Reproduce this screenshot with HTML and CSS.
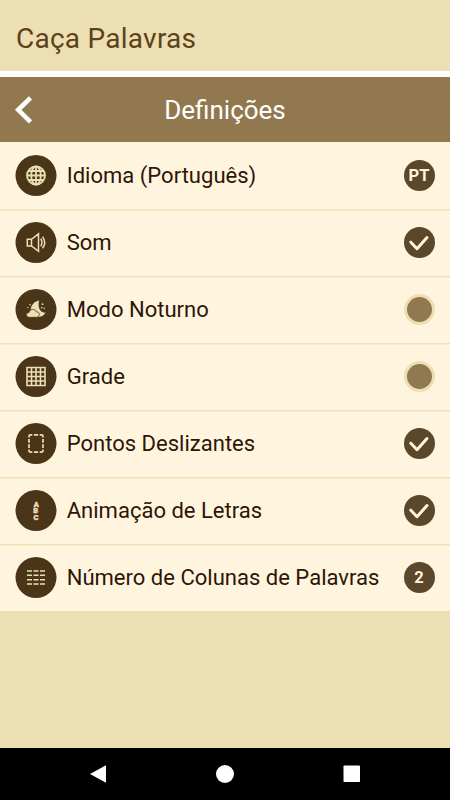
FILE: index.html
```html
<!DOCTYPE html>
<html lang="pt">
<head>
<meta charset="utf-8">
<title>Caça Palavras</title>
<link rel="stylesheet" href="styles.css">
</head>
<body>
<div class="app">
  <header class="titlebar"><h1>Caça Palavras</h1></header>
  <div class="toolbar">
    <svg class="back" viewBox="0 0 20 30"><path d="M16.5 2.8 4.2 14.8 16.5 26.8" fill="none" stroke="#fff" stroke-width="4.6"/></svg>
    <h2>Definições</h2>
  </div>
  <ul class="settings">
    <li class="row">
      <svg class="icon" viewBox="-.5 0 42 42"><circle class="disc" cx="20.5" cy="20.5" r="20.5"/><g class="line" stroke-width="1.8"><circle cx="20.5" cy="20.5" r="9"/><ellipse cx="20.5" cy="20.5" rx="4.8" ry="9"/><path d="M20.5 11.5v18M11.5 20.5h18M13 16h15M13 25h15"/></g></svg>
      <span class="label">Idioma (Português)</span>
      <span class="badge">PT</span>
    </li>
    <li class="row">
      <svg class="icon" viewBox="-.5 0 42 42"><circle class="disc" cx="20.5" cy="20.5" r="20.5"/><g class="line" stroke-width="1.5"><path d="M11.8 17.3h4.2l7-5.4v17.4l-7-5.4h-4.2zM16 17.3v6.6M25.2 16.8q2.6 3.7 0 7.4M27 14.7q4.4 5.8 0 11.6"/></g></svg>
      <span class="label">Som</span>
      <svg class="toggle" viewBox="0 0 31 31"><circle class="on" cx="15.5" cy="15.5" r="15.5"/><path class="check" d="m6.8 15.2 6.2 6.5 10-11.2"/></svg>
    </li>
    <li class="row">
      <svg class="icon" viewBox="-.5 0 42 42"><circle class="disc" cx="20.5" cy="20.5" r="20.5"/><path class="fill" d="M23.6 11.5c-.9 3.6-.6 7.6 1.3 10 1.3 1.5 3.1 2.3 5.2 2.1-1.5 3.2-5 4.9-8.6 4.1-4.3-1-6.8-4.3-6.2-7.8.8-4.5 4-7.6 8.3-8.4z"/><path class="fill cloud" d="M14 28.3c-4 0-4-4.8-.5-4.8.5-3.8 6.3-4.1 7.3-.7 4-.1 4.1 5.5 0 5.5z"/><g class="fill"><circle cx="14.5" cy="15.7" r=".8"/><circle cx="12.4" cy="18.6" r=".7"/><circle cx="27" cy="15.2" r=".9"/><circle cx="26.2" cy="18.7" r=".8"/><circle cx="28.7" cy="19.3" r=".8"/></g></svg>
      <span class="label">Modo Noturno</span>
      <svg class="toggle" viewBox="0 0 31 31"><circle class="off" cx="15.5" cy="15.5" r="14"/></svg>
    </li>
    <li class="row">
      <svg class="icon" viewBox="-.5 0 42 42"><circle class="disc" cx="20.5" cy="20.5" r="20.5"/><path class="line" stroke-width="1.6" d="M11.5 11.5h18v18h-18zM16 11.5v18M20.5 11.5v18M25 11.5v18M11.5 16h18M11.5 20.5h18M11.5 25h18"/></svg>
      <span class="label">Grade</span>
      <svg class="toggle" viewBox="0 0 31 31"><circle class="off" cx="15.5" cy="15.5" r="14"/></svg>
    </li>
    <li class="row">
      <svg class="icon" viewBox="-.5 0 42 42"><circle class="disc" cx="20.5" cy="20.5" r="20.5"/><path class="line" stroke-width="1.7" d="M13.5 14.6v-1.3q0-1.5 1.5-1.5h1.8M24.2 11.8H26q1.5 0 1.5 1.5v1.3M27.5 26.4v1.3q0 1.5-1.5 1.5h-1.8M16.8 29.2H15q-1.5 0-1.5-1.5v-1.3M18.4 11.8h4.2M18.4 29.2h4.2M13.5 16v3.7M13.5 21.3V25M27.5 16v3.7M27.5 21.3V25"/></svg>
      <span class="label">Pontos Deslizantes</span>
      <svg class="toggle" viewBox="0 0 31 31"><circle class="on" cx="15.5" cy="15.5" r="15.5"/><path class="check" d="m6.8 15.2 6.2 6.5 10-11.2"/></svg>
    </li>
    <li class="row">
      <svg class="icon" viewBox="-.5 0 42 42"><circle class="disc" cx="20.5" cy="20.5" r="20.5"/><g class="letters"><text x="20.7" y="17">A</text><text x="20.1" y="23.4">B</text><text x="20.4" y="29.8">C</text></g></svg>
      <span class="label">Animação de Letras</span>
      <svg class="toggle" viewBox="0 0 31 31"><circle class="on" cx="15.5" cy="15.5" r="15.5"/><path class="check" d="m6.8 15.2 6.2 6.5 10-11.2"/></svg>
    </li>
    <li class="row">
      <svg class="icon" viewBox="-.5 0 42 42"><circle class="disc" cx="20.5" cy="20.5" r="20.5"/><path class="line" stroke-width="1.6" stroke-dasharray="5 1.5" d="M11.5 14h18M11.5 18.3h18M11.5 22.7h18M11.5 27h18"/></svg>
      <span class="label">Número de Colunas de Palavras</span>
      <span class="badge">2</span>
    </li>
  </ul>
  <nav class="navbar">
    <svg viewBox="0 0 18 18"><path d="M1 9 17 .2v17.6z"/></svg>
    <svg viewBox="0 0 18 18"><circle cx="9" cy="9" r="9"/></svg>
    <svg viewBox="0 0 18 18"><rect x=".5" y=".5" width="16.5" height="16.5" rx=".8"/></svg>
  </nav>
</div>
</body>
</html>
```
FILE: styles.css
```css
* {
  box-sizing: border-box;
}

body {
  margin: 0;
  font-family: Roboto, "Liberation Sans", sans-serif;
  color: #2e1507;
}

.app {
  display: flex;
  flex-direction: column;
  height: 800px;
  width: 450px;
  background: #ecdfb4;
}

.titlebar {
  height: 77px;
  padding: 0 16px;
  border-bottom: 6px solid #fff;
  display: flex;
  align-items: center;
}

h1,
h2 {
  margin: 0;
  font-weight: 400;
}

h1 {
  font-size: 28px;
  line-height: 34px;
  padding-top: 6px;
  color: #5d4219;
  letter-spacing: 0.25px;
}

.toolbar {
  height: 65px;
  padding: 0 14px;
  display: grid;
  grid-template-columns: 20px 1fr 20px;
  align-items: center;
  background: #92784e;
  color: #fff;
}

.back {
  width: 20px;
  height: 30px;
}

h2 {
  font-size: 26px;
  line-height: 32px;
  padding-top: 1px;
  text-align: center;
}

.settings {
  list-style: none;
  margin: 0;
  padding: 0;
  background: #fff5df;
}

.row {
  display: flex;
  align-items: center;
  height: 67.07px;
  padding: 0 15.5px 0 15px;
}

.row + .row {
  box-shadow: inset 0 1.5px #efe2ba;
}

.icon {
  width: 42px;
  height: 42px;
  flex: none;
}

.disc {
  fill: #4b3519;
}

.line {
  fill: none;
  stroke: #ecdfb4;
}

.fill,
.letters {
  fill: #ecdfb4;
}

.cloud {
  stroke: #4b3519;
  stroke-width: 0.8;
}

.letters {
  font-size: 7.4px;
  font-weight: 900;
  text-anchor: middle;
  stroke: #ecdfb4;
  stroke-width: 0.4;
}

.label {
  flex: 1;
  margin-left: 9.7px;
  font-size: 22.04px;
  line-height: 28px;
  white-space: nowrap;
}

.badge,
.toggle {
  width: 31px;
  height: 31px;
  flex: none;
}

.badge {
  border-radius: 50%;
  background: #5b472a;
  color: #fff5df;
  font-size: 16.5px;
  font-weight: 700;
  line-height: 32px;
  text-align: center;
}

.on {
  fill: #5b472a;
}

.off {
  fill: #92784e;
  stroke: #ecdfb4;
  stroke-width: 3;
}

.check {
  fill: none;
  stroke: #fff5df;
  stroke-width: 3;
  stroke-linecap: round;
  stroke-linejoin: round;
}

.navbar {
  margin-top: auto;
  height: 52px;
  padding: 0 89px;
  display: flex;
  align-items: center;
  justify-content: space-between;
  background: #000;
}

.navbar svg {
  width: 18px;
  height: 18px;
  fill: #fff;
}
```
